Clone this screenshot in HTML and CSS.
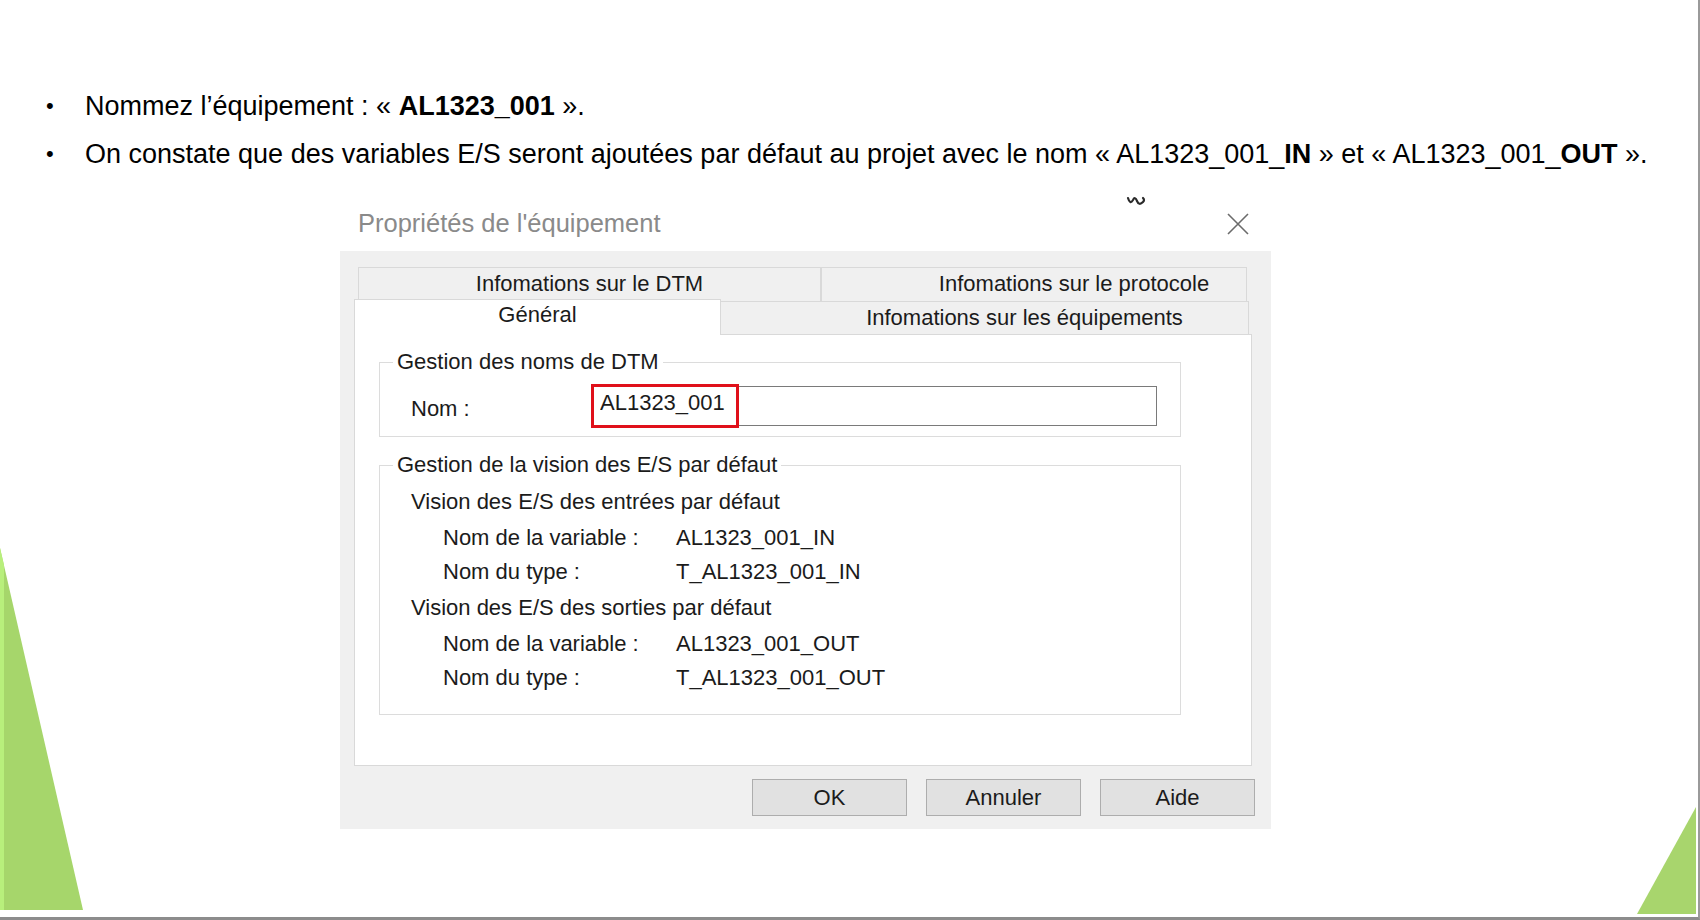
FILE: index.html
```html
<!DOCTYPE html>
<html lang="fr">
<head>
    <meta charset="UTF-8">
    <title>Propriétés de l'équipement</title>
    <link rel="stylesheet" href="styles.css">
</head>
<body>
    <div class="slide">
        <!-- Decorative corners -->
        <svg class="corner corner-left" width="90" height="380" viewBox="0 0 90 380">
            <polygon points="0,11 83,373 0,373" fill="#a6d66b"/>
            <polygon points="0,11 4,28 4,373 0,373" fill="#b8ef7c"/>
        </svg>
        <svg class="corner corner-right" width="64" height="110" viewBox="0 0 64 110">
            <polygon points="62,0 62,107 3,107" fill="#a8d56d"/>
        </svg>

        <!-- Bullets -->
        <ul class="bullets">
            <li><span class="dot">•</span><span>Nommez l’équipement : « <b>AL1323_001</b> ».</span></li>
            <li><span class="dot">•</span><span>On constate que des variables E/S seront ajoutées par défaut au projet avec le nom « AL1323_001_<b>IN</b> » et « AL1323_001_<b>OUT</b> ».</span></li>
        </ul>

        <!-- Dialog -->
        <div class="dialog">
            <div class="titlebar">
                <span class="title">Propriétés de l'équipement</span>
                <svg class="cursor-mark" width="26" height="14" viewBox="0 0 26 14">
                    <path d="M2 4 Q4 11 7 6 Q9 2 11 7 Q13 12 17 8 Q19 6 17 4" fill="none" stroke="#2a2a2a" stroke-width="2.2" stroke-linecap="round"/>
                </svg>
                <svg class="close" width="24" height="24" viewBox="0 0 24 24">
                    <path d="M2 2 L22 22 M22 2 L2 22" stroke="#6b6b6b" stroke-width="1.6"/>
                </svg>
            </div>

            <div class="panel">
                <div class="tabs-top">
                    <div class="tab">Infomations sur le DTM</div>
                    <div class="tab tab-offset">Infomations sur le protocole</div>
                </div>
                <div class="tabs-bottom">
                    <div class="tab tab-active">Général</div>
                    <div class="tab tab-offset">Infomations sur les équipements</div>
                </div>

                <div class="tab-content">
                    <fieldset class="group group-names">
                        <legend>Gestion des noms de DTM</legend>
                        <div class="name-row">
                            <label class="name-label" for="nom">Nom :</label>
                            <div class="input-wrap">
                                <input id="nom" type="text" value="AL1323_001">
                                <div class="highlight"></div>
                            </div>
                        </div>
                    </fieldset>

                    <fieldset class="group group-io">
                        <legend>Gestion de la vision des E/S par défaut</legend>
                        <div class="io-head">Vision des E/S des entrées par défaut</div>
                        <div class="io-row"><span class="io-key">Nom de la variable :</span><span>AL1323_001_IN</span></div>
                        <div class="io-row"><span class="io-key">Nom du type :</span><span>T_AL1323_001_IN</span></div>
                        <div class="io-head">Vision des E/S des sorties par défaut</div>
                        <div class="io-row"><span class="io-key">Nom de la variable :</span><span>AL1323_001_OUT</span></div>
                        <div class="io-row"><span class="io-key">Nom du type :</span><span>T_AL1323_001_OUT</span></div>
                    </fieldset>
                </div>

                <div class="buttons">
                    <button>OK</button>
                    <button>Annuler</button>
                    <button>Aide</button>
                </div>
            </div>
        </div>
    </div>
</body>
</html>
```

FILE: styles.css
```css
/* Global */
body {
    margin: 0;
    padding: 0;
    background-color: #fff;
    font-family: "Liberation Sans", Arial, sans-serif;
    color: #000;
}

.slide {
    position: relative;
    width: 1700px;
    height: 920px;
    overflow: hidden;
    box-sizing: border-box;
    border-right: 2px solid #9a9a9a;
    border-bottom: 3px solid #8c8c8c;
}

/* Corner decorations */
.corner {
    position: absolute;
}

.corner-left {
    left: 0;
    bottom: 0;
}

.corner-right {
    right: 0;
    bottom: 0;
}

/* Bullets */
.bullets {
    list-style: none;
    margin: 82px 0 0 0;
    padding: 0 0 0 46px;
    font-size: 27px;
}

.bullets li {
    display: flex;
    height: 48px;
    line-height: 48px;
}

.bullets .dot {
    width: 39px;
    flex-shrink: 0;
    font-size: 22px;
}

/* Dialog */
.dialog {
    width: 931px;
    margin: 18px 0 0 340px;
    font-size: 22px;
    color: #1b1b1b;
}

.titlebar {
    display: flex;
    align-items: center;
    height: 55px;
    padding-left: 18px;
    position: relative;
}

.title {
    color: #8a8a8a;
    font-size: 25.5px;
    flex: 1;
}

.cursor-mark {
    position: absolute;
    left: 786px;
    top: -2px;
}

.close {
    margin-right: 21px;
}

.panel {
    background-color: #f0f0f0;
    height: 578px;
    box-sizing: border-box;
    padding: 16px 19px 0 14px;
}

/* Tabs */
.tabs-top {
    display: flex;
    margin: 0 5px 0 4px;
    height: 34px;
}

.tabs-bottom {
    display: flex;
    height: 33px;
    margin-right: 3px;
}

.tab {
    box-sizing: border-box;
    border: 1px solid #d9d9d9;
    border-bottom: none;
    background-color: #f0f0f0;
    text-align: center;
    line-height: 32px;
    white-space: nowrap;
}

.tabs-top .tab:first-child {
    width: 463px;
}

.tab-offset {
    flex: 1;
    padding-left: 80px;
    border-left: none;
}

.tabs-top .tab-offset {
    border-left: 1px solid #d9d9d9;
}

.tab-active {
    width: 367px;
    background-color: #fff;
    margin-top: -2px;
    height: 36px;
    line-height: 30px;
    position: relative;
    z-index: 1;
}

.tab-content {
    background-color: #fff;
    border: 1px solid #d9d9d9;
    height: 432px;
    box-sizing: border-box;
    padding: 14px 70px 0 24px;
}

/* Group boxes */
.group {
    margin: 0;
    border: 1px solid #dcdcdc;
    padding: 0 0 0 31px;
}

.group legend {
    padding: 0 4px;
    margin-left: -18px;
    line-height: 26px;
}

.group-names {
    height: 88px;
    box-sizing: border-box;
}

.name-row {
    display: flex;
    align-items: center;
    margin-top: 11px;
}

.name-label {
    width: 180px;
    padding-top: 6px;
}

.input-wrap {
    position: relative;
    width: 566px;
}

.input-wrap input {
    width: 100%;
    height: 40px;
    box-sizing: border-box;
    border: 1px solid #7a7a7a;
    font: inherit;
    color: #1b1b1b;
    padding: 0 8px 6px 8px;
    margin: 0;
    display: block;
}

.highlight {
    position: absolute;
    left: 0;
    top: -2px;
    width: 148px;
    height: 44px;
    box-sizing: border-box;
    border: 3px solid #e0101a;
}

.group-io {
    margin-top: 15px;
    height: 263px;
    box-sizing: border-box;
    padding-top: 5px;
}

.io-head {
    line-height: 38px;
}

.io-row {
    display: flex;
    line-height: 34px;
    padding-left: 32px;
}

.io-key {
    width: 233px;
}

/* Buttons */
.buttons {
    display: flex;
    justify-content: flex-end;
    gap: 19px;
    margin: 13px -3px 0 0;
}

.buttons button {
    width: 155px;
    height: 37px;
    background-color: #e1e1e1;
    border: 1px solid #adadad;
    font: inherit;
    color: #1b1b1b;
    padding: 0;
}
```
